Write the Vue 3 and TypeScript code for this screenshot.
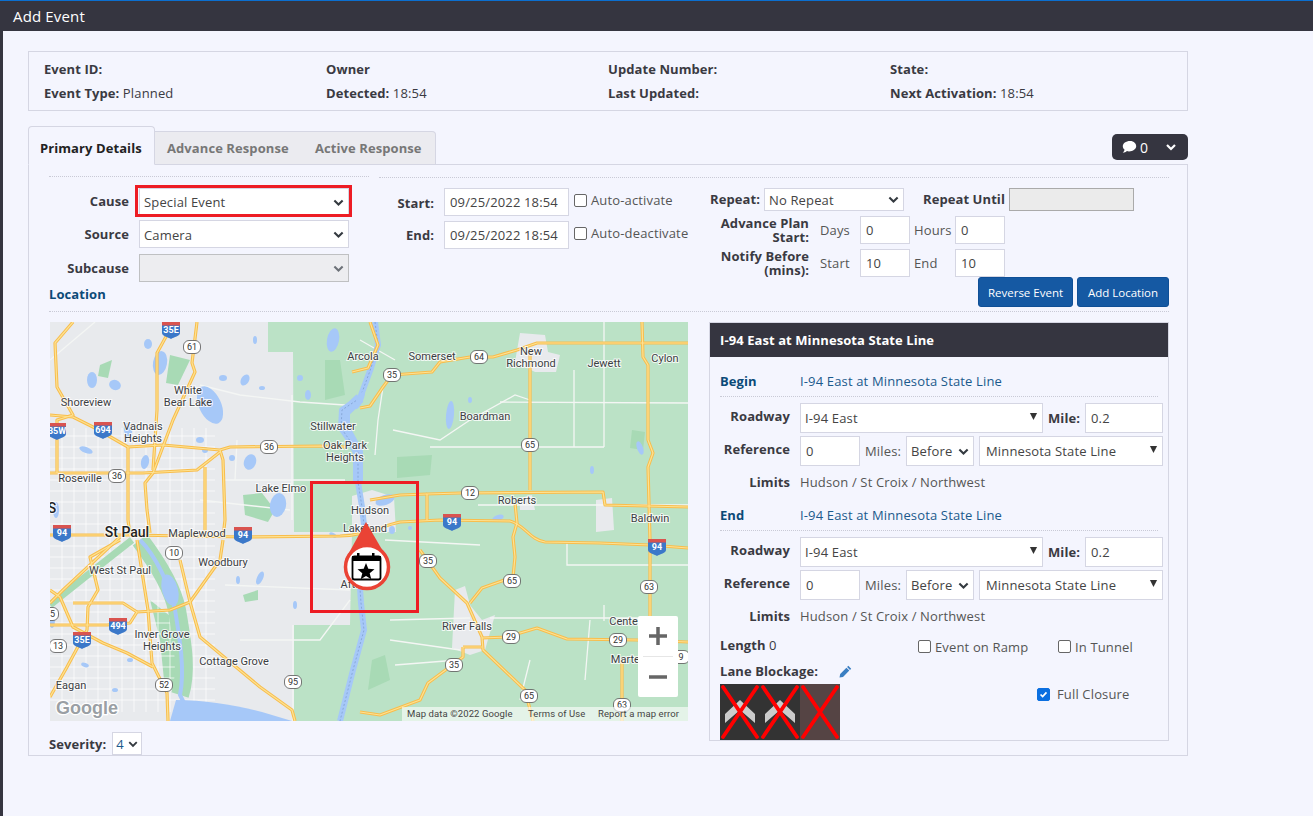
<template>
  <div class="page">
    <header class="title-bar">Add Event</header>
    <main class="main">
      <section class="info-box">
        <div v-for="item in infoItems" :key="item.label" class="info-item">
          <b>{{ item.label }}</b> {{ item.value }}
        </div>
      </section>

      <div class="tab-row">
        <div class="tabs">
          <div class="tab active">Primary Details</div>
          <div class="tab advance">Advance Response</div>
          <div class="tab activeresp">Active Response</div>
        </div>
        <button class="comment-btn" type="button">
          <svg width="16" height="14" viewBox="0 0 16 14"><path d="M8 1C3.900 1 .8 3.300.8 6.300c0 1.400.7 2.600 1.800 3.500-.2 1-.9 2-1.800 3 1.700-.1 3.100-.7 4.100-1.700.7.200 1.400.3 2.100.3 4.100 0 7.200-2.400 7.200-5.100S12.100 1 8 1z" fill="#fff"/></svg>
          <span>0</span>
          <svg class="comment-chevron" width="12" height="10" viewBox="0 0 12 10"><path d="M2 3l4 4 4-4" fill="none" stroke="#fff" stroke-width="2.200"/></svg>
        </button>
      </div>

      <section class="tab-body">
        <div class="form-top">
          <div class="form-left">
            <div class="field-row cause-row">
              <label>Cause</label>
              <div class="cause-wrap">
                <select class="sel wide"><option>Special Event</option></select>
                <div class="red-box cause-mark"></div>
              </div>
            </div>
            <div class="field-row source-row">
              <label>Source</label>
              <select class="sel wide"><option>Camera</option></select>
            </div>
            <div class="field-row subcause-row">
              <label>Subcause</label>
              <select class="sel wide" disabled></select>
            </div>
            <div class="section-link location">Location</div>
          </div>

          <div class="form-right">
            <div class="dates">
              <div class="date-row start-row">
                <label>Start:</label>
                <input class="inp date" value="09/25/2022 18:54" />
                <span class="check"><i class="box"></i>Auto-activate</span>
              </div>
              <div class="date-row">
                <label>End:</label>
                <input class="inp date" value="09/25/2022 18:54" />
                <span class="check"><i class="box"></i>Auto-deactivate</span>
              </div>
            </div>
            <div class="repeat">
              <div class="repeat-row">
                <label class="repeat-label">Repeat:</label>
                <select class="sel repeat-sel"><option>No Repeat</option></select>
                <label class="until-label">Repeat Until</label>
                <input class="inp until" disabled />
              </div>
              <div class="plan-row first">
                <label class="plan-label">Advance Plan Start:</label>
                <span class="unit">Days</span>
                <input class="inp small" value="0" />
                <span class="unit2">Hours</span>
                <input class="inp small" value="0" />
              </div>
              <div class="plan-row">
                <label class="plan-label">Notify Before (mins):</label>
                <span class="unit">Start</span>
                <input class="inp small" value="10" />
                <span class="unit2">End</span>
                <input class="inp small" value="10" />
              </div>
              <div class="btn-row">
                <button class="btn reverse" type="button">Reverse Event</button>
                <button class="btn add" type="button">Add Location</button>
              </div>
            </div>
          </div>
        </div>

        <div class="work-row">
          <div class="map-col">
            <div class="map">
              <svg class="map-svg" viewBox="50 322 638 399" width="638" height="399">
                <rect x="50" y="322" width="638" height="399" fill="#e8eaed" />
                <path d="M268 322H688V721H294V625H350L352 532L294 532L293 352L268 352Z" fill="#bbe2c6" />
                <path v-for="(p, i) in grayPatches" :key="'g' + i" :d="p" fill="#e8eaed" />
                <path v-for="(p, i) in darkGreens" :key="'d' + i" :d="p" fill="#a8dab5" />
                <path v-for="(l, i) in streets" :key="'s' + i" :d="l" stroke="#fff" stroke-width="0.8" fill="none" opacity="0.9" />
                <path v-for="(l, i) in minorRoads" :key="'m' + i" :d="l" stroke="#f4f6f4" stroke-width="1.300" fill="none" />
                <path d="M140 540C155 560 172 585 177 610C182 640 188 670 180 695" stroke="#a8dab5" stroke-width="18" fill="none" />
                <path d="M140 540C155 555 170 585 175 610C180 640 185 670 180 695L184 703" stroke="#a6c8f8" stroke-width="4" fill="none" />
                <path d="M176 700C205 700 235 705 262 712L292 721H170Z" fill="#a6c8f8" />
                <path d="M50 605C75 585 100 565 132 540" stroke="#a8dab5" stroke-width="7" fill="none" />
                <path :d="river" stroke="#a6c8f8" stroke-width="6" fill="none" stroke-linejoin="round" />
                <path d="M360 398L345 412L345 428L358 452L358 482" stroke="#a6c8f8" stroke-width="10" fill="none" />
                <path :d="river" stroke="#7f9fd0" stroke-width="0.8" stroke-dasharray="2 2" fill="none" />
                <ellipse v-for="(w, i) in lakes" :key="'w' + i" :cx="w[0]" :cy="w[1]" :rx="w[2]" :ry="w[3]" :transform="`rotate(${w[4]} ${w[0]} ${w[1]})`" fill="#a6c8f8" />
                <g fill="none" stroke-linejoin="round">
                  <path v-for="(r, i) in highways" :key="'o' + i" :d="r" stroke="#f8bd4c" stroke-width="3.200" />
                  <path v-for="(r, i) in highways" :key="'n' + i" :d="r" stroke="#fde293" stroke-width="1.200" />
                </g>
                <text v-for="(t, i) in labels" :key="'t' + i" :x="t[0]" :y="t[1]" class="map-label" :class="{ big: t[3] }" text-anchor="middle">{{ t[2] }}</text>
                <g v-for="(s, i) in stateShields" :key="'r' + i" :transform="`translate(${s[0]} ${s[1]})`">
                  <rect x="-8.500" y="-6.500" width="17" height="13" rx="5.500" fill="#fff" stroke="#555" stroke-width="0.800" />
                  <text y="3.200" class="shield-text" text-anchor="middle">{{ s[2] }}</text>
                </g>
                <g v-for="(s, i) in interstates" :key="'h' + i" :transform="`translate(${s[0]} ${s[1]})`">
                  <path d="M-9 -8H9V3C9 6 3 7 0 9C-3 7 -9 6 -9 3Z" fill="#3b78c9" />
                  <path d="M-9 -8H9V-4.500H-9Z" fill="#d9534f" />
                  <text y="3.300" class="shield-text white" text-anchor="middle">{{ s[2] }}</text>
                </g>
                <text x="87" y="714" class="google">Google</text>
                <rect x="402" y="707" width="286" height="14" fill="#fff" opacity="0.6" />
                <text x="407" y="717" class="attrib">Map data ©2022 Google</text>
                <text x="528" y="717" class="attrib">Terms of Use</text>
                <text x="598" y="717" class="attrib">Report a map error</text>
                <path d="M366 522L345 560H388Z" fill="#ea4335" />
                <circle cx="367" cy="567" r="21.500" fill="#fff" stroke="#ea4335" stroke-width="3.500" />
                <rect x="352.500" y="556.500" width="28" height="23" rx="2" fill="#fff" stroke="#000" stroke-width="1.800" />
                <rect x="352" y="556" width="29" height="5" fill="#000" />
                <rect x="357" y="553" width="2.500" height="5" fill="#000" />
                <rect x="372" y="553" width="2.500" height="5" fill="#000" />
                <path d="M366 563L368.300 568.800 374.500 569.200 369.700 573.200 371.300 579.200 366 575.900 360.700 579.200 362.300 573.200 357.500 569.200 363.700 568.800Z" fill="#000" />
              </svg>
              <div class="red-box map-mark"></div>
              <div class="zoom-ctl">
                <div class="zoom-btn">
                  <svg width="20" height="20" viewBox="0 0 20 20"><path d="M10 1V19M1 10H19" stroke="#666" stroke-width="3.500" /></svg>
                </div>
                <div class="zoom-sep"></div>
                <div class="zoom-btn">
                  <svg width="20" height="20" viewBox="0 0 20 20"><path d="M1 10H19" stroke="#666" stroke-width="3.500" /></svg>
                </div>
              </div>
            </div>
            <div class="severity">
              <label>Severity:</label>
              <select class="sel sev"><option>4</option></select>
            </div>
          </div>

          <aside class="loc-panel">
            <div class="loc-head">I-94 East at Minnesota State Line</div>
            <div class="loc-body">
              <div v-for="sec in sections" :key="sec" class="loc-section">
                <div class="loc-title">
                  <span class="section-link">{{ sec }}</span>
                  <span class="loc-value">I-94 East at Minnesota State Line</span>
                </div>
                <div class="loc-row first">
                  <label>Roadway</label>
                  <select class="sel tri road"><option>I-94 East</option></select>
                  <label class="mile-label">Mile:</label>
                  <input class="inp mile" value="0.2" />
                </div>
                <div class="loc-row">
                  <label>Reference</label>
                  <input class="inp ref" value="0" />
                  <span class="miles">Miles:</span>
                  <select class="sel before"><option>Before</option></select>
                  <select class="sel tri state-line"><option>Minnesota State Line</option></select>
                </div>
                <div class="loc-row limits">
                  <label>Limits</label>
                  <span>Hudson / St Croix / Northwest</span>
                </div>
              </div>
              <div class="length-row">
                <span class="length"><b>Length</b> 0</span>
                <span class="check ramp"><i class="box"></i>Event on Ramp</span>
                <span class="check tunnel"><i class="box"></i>In Tunnel</span>
              </div>
              <div class="lane-row">
                <div class="lane-left">
                  <div class="lane-title">
                    <b>Lane Blockage:</b>
                    <svg width="13" height="13" viewBox="0 0 13 13"><path d="M9.300.8l2.900 2.900-1.200 1.200-2.900-2.900zM7.400 2.700l2.900 2.900-6.300 6.300-3.500.7.700-3.600z" fill="#3a7ec2" /></svg>
                  </div>
                  <svg class="lanes" width="120" height="56" viewBox="0 0 120 56">
                    <rect width="80" height="56" fill="#333" />
                    <rect x="80" width="40" height="56" fill="#544" />
                    <path d="M20 16L35 30V39L20 26L5 39V30Z" fill="#ccc" />
                    <path d="M60 16L75 30V39L60 26L45 39V30Z" fill="#ccc" />
                    <g stroke="#f00" stroke-width="3.800" stroke-linecap="round">
                      <path d="M3 3L37 53M37 3L3 53M43 3L77 53M77 3L43 53M83 3L117 53M117 3L83 53" />
                    </g>
                  </svg>
                </div>
                <span class="check closure"><i class="box on">
                  <svg width="13" height="13" viewBox="0 0 13 13"><path d="M3 6.500l2.500 2.500 4.500-5" fill="none" stroke="#fff" stroke-width="2" /></svg>
                </i>Full Closure</span>
              </div>
            </div>
          </aside>
        </div>
      </section>
    </main>
  </div>
</template>

<script setup lang="ts">
const infoItems = [
  { label: 'Event ID:', value: '' },
  { label: 'Owner', value: '' },
  { label: 'Update Number:', value: '' },
  { label: 'State:', value: '' },
  { label: 'Event Type:', value: 'Planned' },
  { label: 'Detected:', value: '18:54' },
  { label: 'Last Updated:', value: '' },
  { label: 'Next Activation:', value: '18:54' }
]

const sections = ['Begin', 'End']

// all map coordinates are page pixels, the svg viewBox starts at the map corner
const river = 'M375 322L378 345L371 368L360 398L342 410L341 428L358 452L358 482L362 507L364 525L358 560L361 603L364 630L353 670L340 721'

const grayPatches = [
  'M352 496L372 490L394 497L396 532L352 532Z',
  'M520 333L545 335L548 352L560 355L556 372L535 372L515 362Z',
  'M596 500L612 498L614 530L596 532Z',
  'M455 590L465 586L470 605L482 620L495 615L485 650L470 655L452 648Z',
  'M520 498L532 495L535 510L520 510Z'
]

const darkGreens = [
  'M243 495L262 493L275 510L268 522L245 515Z',
  'M397 457L432 455L430 475L397 478Z',
  'M100 365L112 360L108 378L98 376Z',
  'M170 355L190 360L178 385L166 383Z',
  'M150 600L175 620L185 690L165 690L160 640Z',
  'M243 595L258 590L258 600L245 602Z',
  'M325 360L340 360L345 395L325 400Z',
  'M372 660L385 655L390 680L368 690Z',
  'M632 430L645 432L643 450L630 448Z'
]

const minorRoads = [
  'M50 360L95 322',
  'M200 385L240 395L300 402L345 405',
  'M360 340L395 360M383 387L378 420L375 455',
  'M393 430L440 440L470 420L515 395L530 400',
  'M500 402L688 403',
  'M430 447H604',
  'M604 322V447',
  'M574 370V447',
  'M478 505H688',
  'M567 543V565H688',
  'M385 540L480 545',
  'M490 618H650',
  'M604 605V621',
  'M390 620L470 618',
  'M390 640L460 650',
  'M395 665L458 660',
  'M530 660L520 700M590 620L585 680',
  'M225 480L345 480',
  'M237 440L235 480M292 395V520',
  'M225 585L350 590',
  'M240 640L320 640L350 600',
  'M293 625V721',
  'M200 500L290 510'
]

const streets: string[] = []
for (let x = 62; x <= 215; x += 12) {
  streets.push(`M${x} 428V712`)
}
for (let y = 436; y <= 700; y += 11) {
  streets.push(`M50 ${y}H215`)
}

const highways = [
  'M50 535L130 535L244 537L340 536C370 535 380 526 400 522L440 520L510 521C525 525 530 540 545 542L600 543L650 545L688 548',
  'M197 322L192 363L195 372L173 420L153 473L145 483L147 510L150 533',
  'M168 333L157 353L157 410L153 470',
  'M50 415L73 417L93 427L128 447L163 445L220 450L230 447L320 446L345 447',
  'M128 447V520L130 535',
  'M220 450L223 460L225 520L223 537',
  'M50 473L130 473L143 473L197 470L220 452',
  'M73 322L55 343L57 387L73 415L57 420L57 473',
  'M205 467V535',
  'M360 408L370 406L383 387L392 375L432 372L440 362L470 357L493 357L517 350L537 343H688',
  'M530 350V490',
  'M642 322L643 357L648 365V440L653 453L648 467L650 540V617',
  'M427 520L427 494L460 493L603 492L605 505L688 507',
  'M515 503L517 523L513 537L515 557L513 577L482 588L470 603',
  'M420 550L440 578L467 603L482 637L483 650L525 690L533 721',
  'M482 638L507 637L537 628L567 639L637 640L688 642',
  'M463 647H482M463 647V657L428 683L420 700L380 715L360 712',
  'M622 660V721',
  'M50 625L107 625L130 623L137 612L170 610L190 602L220 560L223 540',
  'M180 560L190 602L200 637L260 687L292 710L295 721',
  'M137 540L148 610L152 663L167 693L168 721',
  'M120 540L90 557L98 590L88 607L87 630L67 667L50 697',
  'M50 590L60 597L73 627L103 643L127 653L153 667',
  'M120 537L63 590L50 603',
  'M73 603L123 603L137 612',
  'M370 322L378 345L368 368L352 372',
  'M370 500L400 495L427 494'
]

const lakes: number[][] = [
  [210, 405, 11, 20, -25], [92, 380, 5, 8, 0], [115, 385, 6, 5, 20], [128, 430, 7, 4, 80], [160, 363, 7, 12, 10],
  [86, 450, 7, 3, 20], [175, 330, 5, 3, 0], [148, 344, 4, 5, 0], [200, 440, 4, 3, 0], [145, 462, 4, 7, 10],
  [245, 380, 4, 6, 30], [223, 378, 4, 3, 0], [255, 340, 2, 4, 0], [262, 388, 3, 2, 0], [250, 462, 6, 8, 20],
  [205, 450, 3, 3, 0], [232, 458, 3, 3, 0], [278, 505, 8, 12, 10], [333, 340, 6, 12, 10], [308, 395, 3, 5, 0],
  [300, 378, 3, 3, 0], [170, 590, 8, 16, -15], [260, 578, 3, 7, 25], [238, 580, 2, 4, 0], [295, 605, 2, 4, 0],
  [115, 690, 3, 2, 0], [130, 660, 3, 2, 0], [85, 665, 4, 2, 20], [450, 415, 4, 14, 5], [470, 400, 2, 3, 0],
  [385, 500, 10, 5, -20], [410, 528, 2, 2, 0], [360, 400, 3, 10, 25], [498, 518, 6, 3, -20], [592, 470, 2, 4, 0],
  [640, 448, 3, 7, -20], [392, 530, 3, 4, 0], [333, 535, 4, 2, 30], [56, 510, 3, 8, 0], [52, 620, 3, 8, 0]
]

const labels: [number, number, string, boolean?][] = [
  [363, 360, 'Arcola'], [432, 360, 'Somerset'], [531, 355, 'New'], [531, 367, 'Richmond'], [604, 367, 'Jewett'],
  [665, 362, 'Cylon'], [188, 394, 'White'], [188, 406, 'Bear Lake'], [86, 406, 'Shoreview'], [143, 430, 'Vadnais'],
  [143, 442, 'Heights'], [333, 430, 'Stillwater'], [345, 449, 'Oak Park'], [345, 461, 'Heights'], [485, 420, 'Boardman'],
  [80, 482, 'Roseville'], [281, 492, 'Lake Elmo'], [370, 514, 'Hudson'], [365, 532, 'Lakeland'], [517, 504, 'Roberts'],
  [650, 522, 'Baldwin'], [127, 537, 'St Paul', true], [197, 537, 'Maplewood'], [223, 566, 'Woodbury'], [120, 574, 'West St Paul'],
  [354, 588, 'Afton'], [467, 630, 'River Falls'], [635, 625, 'Centerville'], [628, 663, 'Martell'], [162, 638, 'Inver Grove'],
  [162, 650, 'Heights'], [234, 665, 'Cottage Grove'], [71, 689, 'Eagan'], [52, 513, 'S', true]
]

const stateShields: [number, number, string][] = [
  [192, 347, '61'], [269, 447, '36'], [117, 476, '36'], [392, 375, '35'], [479, 357, '64'], [530, 445, '65'],
  [470, 493, '12'], [174, 553, '10'], [428, 561, '35'], [512, 581, '65'], [649, 587, '63'], [511, 637, '29'],
  [618, 640, '29'], [454, 665, '35'], [529, 696, '65'], [622, 705, '63'], [164, 685, '52'], [293, 682, '95'],
  [58, 646, '13'], [681, 657, '9'], [50, 614, '35']
]

const interstates: [number, number, string][] = [
  [171, 330, '35E'], [103, 430, '694'], [57, 431, '35W'], [62, 533, '94'], [243, 535, '94'],
  [452, 522, '94'], [657, 547, '94'], [118, 626, '494'], [82, 640, '35E']
]
</script>

<style>
html,
body {
  margin: 0;
  background: #f4f5fe;
}
</style>

<style scoped>
.page {
  width: 1313px;
  height: 816px;
  overflow: hidden;
  box-sizing: border-box;
  border-top: 1px solid #0b6fd0;
  background: #f4f5fe;
  font-family: "Open Sans", sans-serif;
  font-size: 13px;
  letter-spacing: 0.15px;
  color: #3a3a42;
}
.title-bar {
  height: 30px;
  line-height: 30px;
  padding-left: 13px;
  background: #353540;
  color: #fff;
  font-size: 15px;
}
.main {
  border-left: 3px solid #353540;
  height: 785px;
  padding: 20px 125px 0 25px;
}
b, label, .tab, .loc-head, .section-link {
  font-weight: 700;
  letter-spacing: 0.08px;
}
.info-box {
  display: grid;
  grid-template-columns: repeat(4, 282px);
  grid-auto-rows: 24px;
  padding: 5px 0 0 15px;
  box-sizing: border-box;
  height: 60px;
  border: 1px solid #d5d6e3;
  align-items: center;
}
.tab-row {
  display: flex;
  justify-content: space-between;
  margin-top: 15px;
  height: 39px;
  margin-bottom: -1px;
  position: relative;
}
.tabs {
  display: flex;
  align-items: flex-end;
}
.tab {
  height: 34px;
  line-height: 33px;
  padding: 0 0 0 12px;
  background: #ebebf0;
  border: 1px solid #d5d6e3;
  border-left: none;
  color: #777;
  box-sizing: border-box;
}
.advance {
  width: 147px;
  border-right: none;
}
.activeresp {
  width: 134px;
  padding-left: 13px;
  border-radius: 0 4px 0 0;
}
.tab.active {
  height: 39px;
  line-height: 43px;
  padding: 0 0 0 11px;
  width: 127px;
  background: #f4f5fe;
  border: 1px solid #d5d6e3;
  border-bottom-color: #f4f5fe;
  border-radius: 4px 4px 0 0;
  color: #222;
}
.comment-btn {
  display: flex;
  align-items: center;
  margin-top: 8px;
  width: 76px;
  height: 26px;
  padding: 0 0 0 10px;
  background: #353540;
  border: none;
  border-radius: 5px;
  color: #fff;
  font: 14px "Open Sans", sans-serif;
}
.comment-btn span {
  margin-left: 2px;
}
.comment-chevron {
  margin-left: 17px;
}
.tab-body {
  height: 592px;
  box-sizing: border-box;
  border: 1px solid #d5d6e3;
  padding: 11px 18px 0 20px;
}
.form-top {
  display: flex;
  gap: 10px;
  height: 135px;
  border-bottom: 1px dotted #c9cad6;
}
.form-left {
  width: 320px;
  flex: none;
  border-top: 1px dotted #c9cad6;
  box-sizing: border-box;
  padding-top: 11px;
}
.form-right {
  flex: 1;
  display: flex;
  margin-top: 1px;
  border-top: 1px dotted #c9cad6;
  padding-top: 10px;
}
.field-row {
  display: flex;
  align-items: center;
  gap: 10px;
  height: 28px;
}
.field-row label {
  width: 80px;
  text-align: right;
  flex: none;
}
.cause-row label {
  margin-top: -2px;
}
.source-row {
  margin-top: 4px;
}
.source-row .sel {
  padding-top: 1px;
}
.subcause-row {
  margin-top: 6px;
}
.cause-wrap {
  position: relative;
}
.red-box {
  position: absolute;
  box-sizing: border-box;
  border: 3px solid #ed1c24;
  pointer-events: none;
}
.cause-mark {
  left: -4px;
  right: -3px;
  top: -3px;
  bottom: -1px;
}
.sel, .inp {
  box-sizing: border-box;
  height: 28px;
  border: 1px solid #d5d6e3;
  background-color: #fff;
  color: #444;
  font: 13px "Open Sans", sans-serif;
  letter-spacing: 0.15px;
  border-radius: 0;
  outline: none;
  margin: 0;
}
.inp {
  padding: 0 5px;
}
.sel {
  appearance: none;
  padding: 0 20px 0 4px;
  background-repeat: no-repeat;
  background-position: right 4px center;
  background-size: 11px 11px;
  background-image: url("data:image/svg+xml,%3csvg xmlns='http://www.w3.org/2000/svg' viewBox='0 0 16 16'%3e%3cpath fill='none' stroke='%23343a40' stroke-width='3' d='M2 5l6 6 6-6'/%3e%3c/svg%3e");
}
.sel.tri {
  background-size: 9px 9px;
  background-position: right 4px top 8px;
  background-image: url("data:image/svg+xml,%3csvg xmlns='http://www.w3.org/2000/svg' viewBox='0 0 10 10'%3e%3cpath fill='%23333' d='M1 1h8L5 9z'/%3e%3c/svg%3e");
}
.sel:disabled, .inp:disabled {
  background-color: #ebebeb;
  border-color: #aaa;
}
.wide {
  width: 210px;
  display: block;
}
.section-link {
  color: #0b4a78;
}
.location {
  margin-top: 3px;
  line-height: 18px;
}
.dates {
  width: 321px;
  flex: none;
}
.date-row {
  display: flex;
  align-items: center;
  height: 28px;
  margin-bottom: 5px;
}
.date-row label {
  width: 55px;
  text-align: right;
  margin-right: 10px;
  flex: none;
}
.start-row label {
  margin-top: 2px;
}
.date {
  width: 125px;
}
.check {
  display: inline-flex;
  align-items: center;
  color: #555;
}
.date-row .check {
  margin-left: 5px;
  margin-top: -4px;
}
.box {
  display: inline-flex;
  align-items: center;
  justify-content: center;
  box-sizing: border-box;
  width: 13px;
  height: 13px;
  margin-right: 4px;
  border: 1px solid #666;
  border-radius: 2px;
  background: #fff;
}
.box.on {
  background: #0b6fe0;
  border-color: #0b6fe0;
}
.repeat {
  flex: 1;
  padding-left: 10px;
}
.repeat-row {
  display: flex;
  align-items: center;
  height: 23px;
}
.repeat-label {
  width: 49px;
  text-align: right;
  margin-right: 5px;
  margin-top: -2px;
}
.repeat-sel {
  width: 140px;
  height: 23px;
}
.until-label {
  margin-left: 19px;
  margin-right: 4px;
  margin-top: -2px;
}
.until {
  width: 125px;
  height: 23px;
}
.plan-row {
  display: flex;
  align-items: center;
  margin-top: 5px;
  height: 28px;
}
.plan-label {
  width: 99px;
  line-height: 14px;
  text-align: right;
  margin-right: 11px;
  flex: none;
}
.unit {
  width: 40px;
  flex: none;
}
.unit2 {
  width: 45px;
  flex: none;
  padding-left: 4px;
  box-sizing: border-box;
}
.unit, .unit2, .miles {
  color: #555;
}
.small {
  width: 50px;
}
.btn-row {
  display: flex;
  justify-content: flex-end;
  gap: 4px;
}
.btn {
  height: 30px;
  box-sizing: border-box;
  background: #1559a3;
  border: 1px solid #0f4f96;
  border-radius: 3px;
  color: #fff;
  font: 11.500px "Open Sans", sans-serif;
  padding: 0;
}
.reverse {
  width: 95px;
}
.add {
  width: 92px;
}
.work-row {
  display: flex;
  gap: 21px;
  margin-top: 10px;
  padding-left: 1px;
}
.map-col {
  width: 638px;
  flex: none;
}
.map {
  position: relative;
  width: 638px;
  height: 399px;
  overflow: hidden;
}
.map-svg {
  display: block;
}
.map-label {
  font: 11px Roboto, sans-serif;
  letter-spacing: 0;
  fill: #3c4043;
  stroke: #fff;
  stroke-width: 2px;
  stroke-opacity: 0.8;
  paint-order: stroke;
}
.map-label.big {
  font-size: 14px;
  font-weight: 500;
  fill: #222;
}
.shield-text {
  font: 9px Roboto, sans-serif;
  letter-spacing: 0;
  fill: #333;
}
.shield-text.white {
  fill: #fff;
  font-weight: 700;
}
.google {
  font: 700 18px "Liberation Sans", sans-serif;
  letter-spacing: 0;
  fill: #9a9fa4;
  stroke: #fff;
  stroke-width: 2.500px;
  paint-order: stroke;
  text-anchor: middle;
}
.attrib {
  font: 9.500px Roboto, sans-serif;
  letter-spacing: 0.1px;
  fill: #444;
}
.map-mark {
  left: 260px;
  top: 159px;
  width: 109px;
  height: 132px;
}
.zoom-ctl {
  position: absolute;
  left: 588px;
  top: 294px;
  width: 40px;
  height: 81px;
  background: #fff;
  border-radius: 2px;
}
.zoom-btn {
  height: 40px;
  display: flex;
  align-items: center;
  justify-content: center;
}
.zoom-sep {
  height: 1px;
  margin: 0 5px;
  background: #e6e6e6;
}
.severity {
  display: flex;
  align-items: center;
  gap: 6px;
  margin-top: 11px;
  margin-left: -1px;
}
.sev {
  width: 30px;
  height: 23px;
  padding: 0 0 0 3px;
  background-position: right 3px center;
  background-size: 10px 10px;
  color: #1b5a8c;
}
.loc-panel {
  width: 460px;
  height: 419px;
  box-sizing: border-box;
  border: 1px solid #d5d6e3;
  flex: none;
}
.loc-head {
  height: 34px;
  line-height: 34px;
  padding-left: 10px;
  background: #353540;
  color: #fff;
}
.loc-body {
  padding: 13px 5px 0 10px;
}
.loc-section {
  margin-bottom: 12px;
}
.loc-title {
  display: flex;
  height: 22px;
  padding-bottom: 4px;
  align-items: center;
  width: 438px;
  border-bottom: 1px dotted #c9cad6;
  box-sizing: content-box;
  margin-bottom: 6px;
}
.loc-title .section-link {
  width: 80px;
}
.loc-value {
  color: #1b5a8c;
}
.loc-row {
  display: flex;
  align-items: center;
  height: 30px;
  margin-top: 3px;
}
.loc-row.first {
  margin-top: 0;
}
.loc-row > label:first-child {
  width: 70px;
  text-align: right;
  margin-right: 10px;
  flex: none;
  margin-top: -4px;
}
.loc-row .sel, .loc-row .inp {
  height: 30px;
}
.road {
  width: 243px;
}
.mile-label {
  margin-left: 5px;
  margin-right: 5px;
  width: 32px;
}
.mile {
  width: 78px;
}
.ref {
  width: 60px;
}
.miles {
  margin-left: 5px;
  margin-right: 5px;
  width: 36px;
}
.before {
  width: 68px;
}
.loc-row .state-line {
  width: 184px;
  margin-left: 5px;
  padding-left: 6px;
}
.loc-row.limits {
  margin-top: 6px;
  height: 20px;
}
.loc-row.limits > label:first-child {
  margin-top: 0;
}
.limits span {
  color: #555;
}
.length-row {
  display: flex;
  align-items: center;
  height: 18px;
  margin-top: -2px;
}
.length {
  width: 198px;
  flex: none;
}
.ramp {
  width: 140px;
  flex: none;
  margin-top: 3px;
}
.tunnel {
  margin-top: 3px;
}
.lane-row {
  display: flex;
  margin-top: 8px;
}
.lane-left {
  width: 317px;
  flex: none;
}
.lane-title {
  display: flex;
  align-items: center;
  gap: 21px;
  height: 18px;
  margin-bottom: 4px;
}
.lanes {
  display: block;
}
.closure {
  align-self: flex-start;
  margin-top: 23px;
}
.closure .box {
  margin-right: 7px;
}
</style>
